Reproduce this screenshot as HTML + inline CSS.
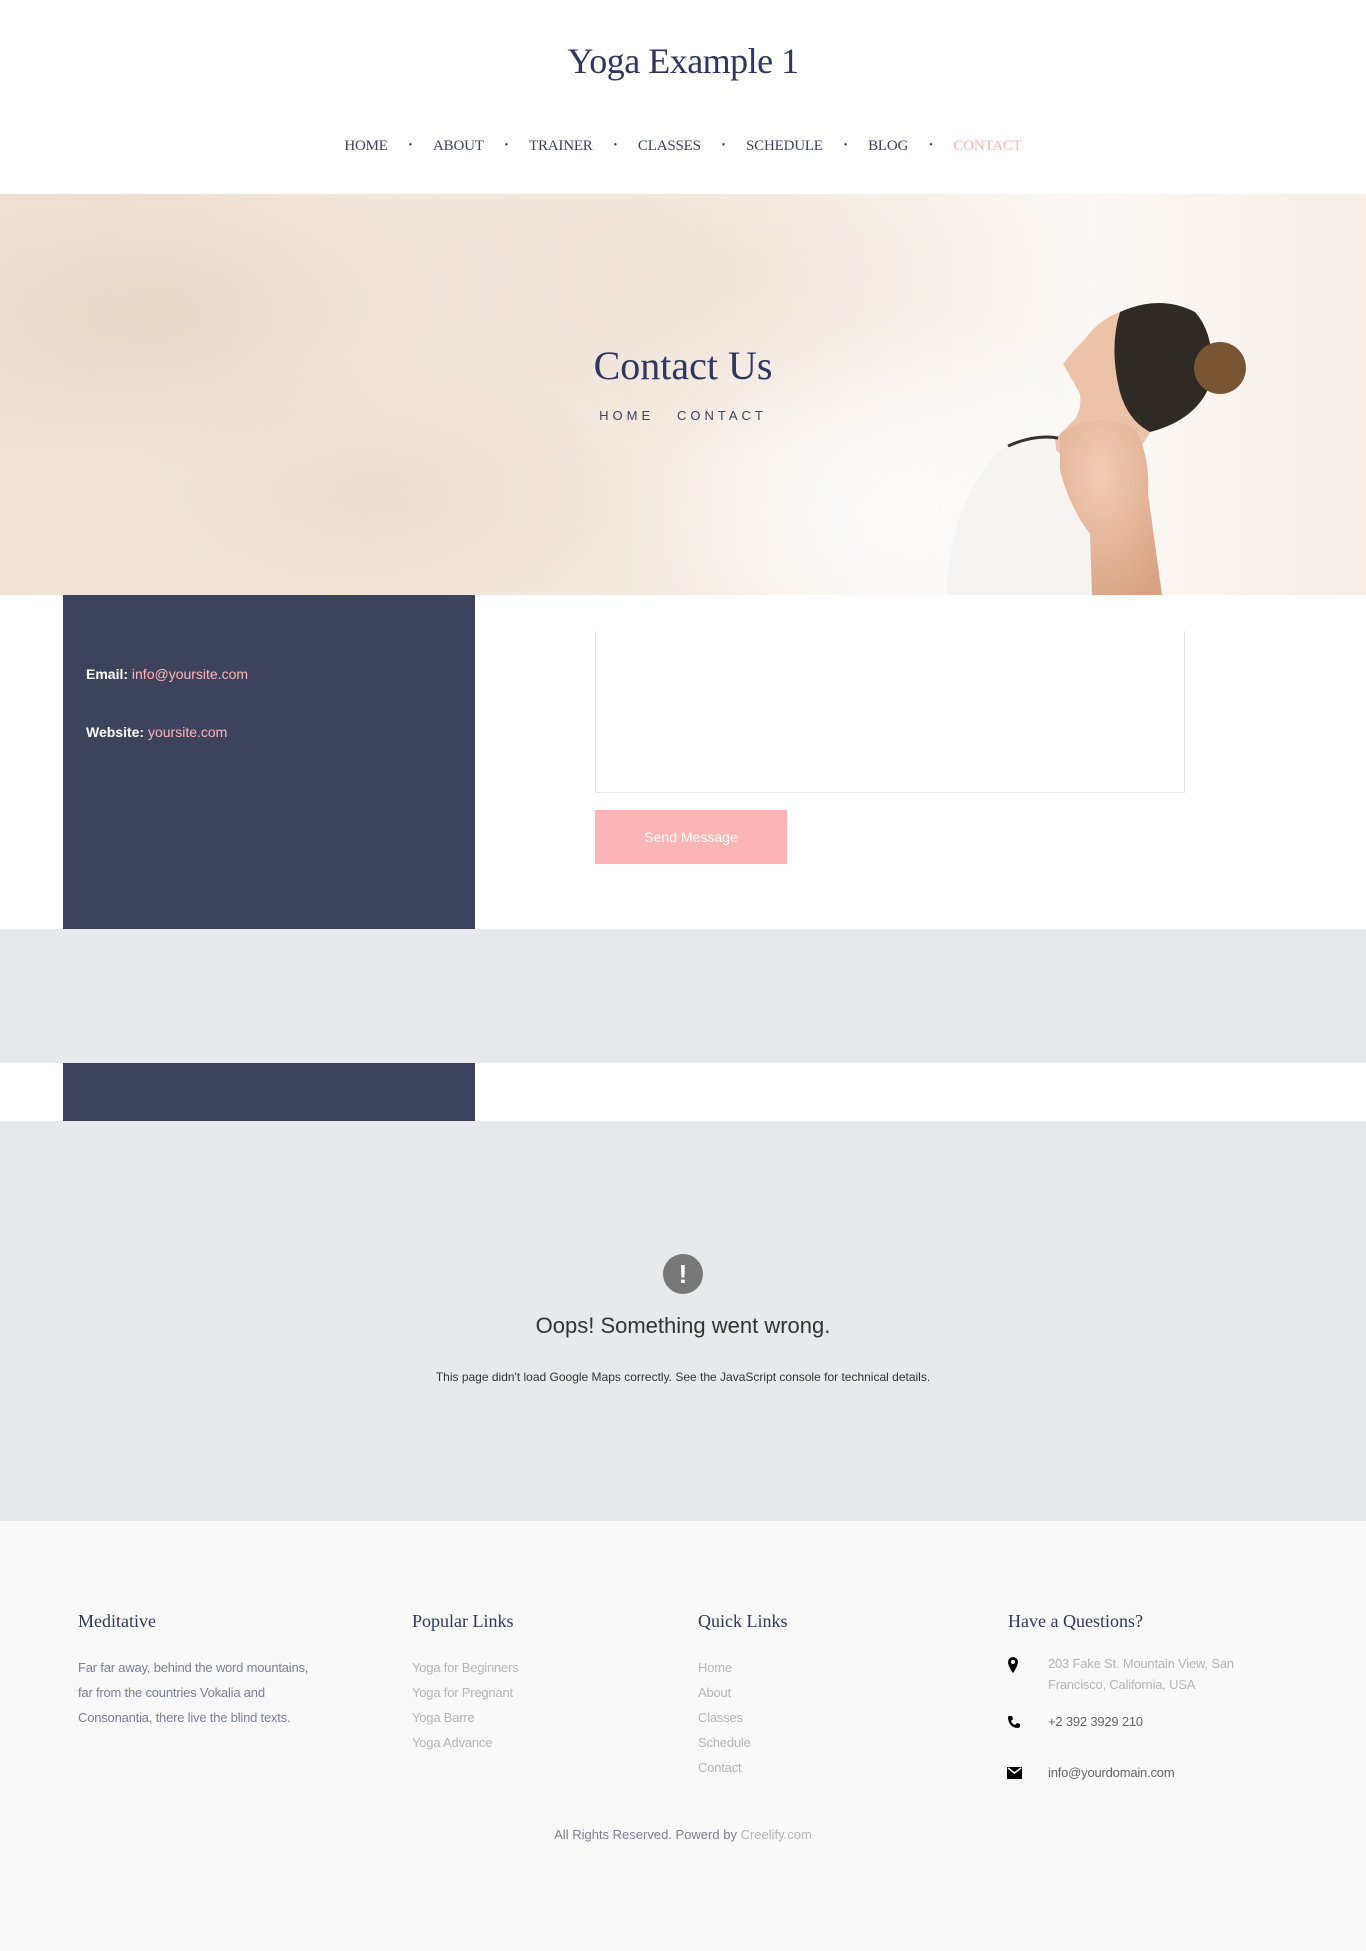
<!DOCTYPE html>
<html><head><meta charset="utf-8"><style>
*{margin:0;padding:0;box-sizing:border-box}
body{width:1366px;height:1951px;background:#fff;position:relative;overflow:hidden;font-family:"Liberation Sans",sans-serif}
.abs{position:absolute}
.serif{font-family:"Liberation Serif",serif}
.title{left:0;width:1366px;top:40px;text-align:center;font-size:36px;color:#2e3661;letter-spacing:-0.5px}
.nav{left:0;width:1366px;top:138px;text-align:center;font-size:15px;color:#3d4159;letter-spacing:-0.2px}
.nav span{margin:0 14px}
.nav .dot{margin:0 7px;font-size:10px;vertical-align:2px}
.hero{left:0;top:194px;width:1366px;height:401px;overflow:hidden;
background:
radial-gradient(ellipse 300px 160px at 150px 120px,rgba(225,205,185,.55),transparent),
radial-gradient(ellipse 260px 140px at 380px 300px,rgba(230,210,190,.5),transparent),
radial-gradient(ellipse 400px 180px at 700px 80px,rgba(235,220,205,.45),transparent),
radial-gradient(ellipse 260px 200px at 900px 320px,rgba(255,255,255,.8),transparent),
linear-gradient(90deg,#efe2d6 0%,#f3e9df 45%,#f8f3ee 65%,#fbf8f5 80%,#f6eee7 100%)}
.tx{font-size:14px;color:#fff}
.tx b{font-weight:bold}
.tx a{color:#ffb5b5;text-decoration:none}
.foot{left:0;top:1521px;width:1366px;height:430px;background:#f9f9f9}
.fh{font-size:18px;color:#2e3661;top:1611px}
.ft{font-size:13px;line-height:25px;color:#b5b5b5;letter-spacing:-0.2px}
</style></head><body>
<div class="abs serif title">Yoga Example 1</div>
<div class="abs serif nav"><span>HOME</span><span class="dot">•</span><span>ABOUT</span><span class="dot">•</span><span>TRAINER</span><span class="dot">•</span><span>CLASSES</span><span class="dot">•</span><span>SCHEDULE</span><span class="dot">•</span><span>BLOG</span><span class="dot">•</span><span style="color:#ffb5b5">CONTACT</span></div>

<div class="abs hero">
<svg width="1366" height="401" style="position:absolute;left:0;top:0">
<defs><radialGradient id="sk" cx=".4" cy=".3" r=".8"><stop offset="0" stop-color="#f1cdb5"/><stop offset="1" stop-color="#d9a283"/></radialGradient></defs>
<path d="M1120 118 Q1100 125 1085 145 Q1070 160 1063 170 Q1072 185 1080 200 Q1082 215 1075 225 L1050 250 L1100 300 Q1145 250 1150 238 Q1125 225 1118 190 Q1112 150 1120 118 Z" fill="#ecc2a8"/>
<path d="M1060 240 Q1100 215 1135 235 Q1150 260 1148 300 Q1155 350 1162 401 L1090 401 Q1080 340 1060 300 Z" fill="url(#sk)"/>
<path d="M1120 118 Q1160 100 1195 118 Q1215 140 1212 185 Q1200 225 1150 238 Q1125 225 1118 190 Q1110 150 1120 118 Z" fill="#2f2a24"/>
<circle cx="1220" cy="174" r="26" fill="#7a5533"/>
<path d="M1010 250 Q1035 240 1055 245 Q1060 300 1090 340 L1092 401 L946 401 Q950 330 975 290 Q990 262 1010 250Z" fill="#f6f3f0"/>
<path d="M1008 252 Q1035 240 1058 244" stroke="#333" stroke-width="3" fill="none"/>
</svg>
<div class="abs serif" style="left:0;width:1366px;top:148px;text-align:center;font-size:40px;color:#2e3661">Contact Us</div>
<div class="abs" style="left:0;width:1366px;top:214px;text-align:center;font-size:13px;letter-spacing:4px;color:#3d4159">HOME &nbsp; CONTACT</div>
</div>

<div class="abs" style="left:63px;top:595px;width:412px;height:334px;background:#3d435c"></div>
<div class="abs tx" style="left:86px;top:666px"><b>Email:</b> <a>info@yoursite.com</a></div>
<div class="abs tx" style="left:86px;top:724px"><b>Website:</b> <a>yoursite.com</a></div>

<div class="abs" style="left:595px;top:631px;width:590px;height:162px;border:1px solid #e6e6e6;border-top:none;background:#fff"></div>
<div class="abs" style="left:595px;top:810px;width:192px;height:54px;background:#ffb5b5;color:#fff;font-size:14px;text-align:center;line-height:54px">Send Message</div>

<div class="abs" style="left:0;top:929px;width:1366px;height:134px;background:#e8e9ed"></div>
<div class="abs" style="left:63px;top:1063px;width:412px;height:58px;background:#3d435c"></div>
<div class="abs" style="left:0;top:1121px;width:1366px;height:400px;background:#e8e9ed"></div>
<div class="abs" style="left:663px;top:1254px;width:40px;height:40px;border-radius:50%;background:#777;color:#fff;font-weight:bold;font-size:26px;text-align:center;line-height:40px">!</div>
<div class="abs" style="left:0;width:1366px;top:1313px;text-align:center;font-size:22px;color:#333">Oops! Something went wrong.</div>
<div class="abs" style="left:0;width:1366px;top:1370px;text-align:center;font-size:12px;color:#333">This page didn't load Google Maps correctly. See the JavaScript console for technical details.</div>

<div class="abs foot"></div>
<div class="abs serif fh" style="left:78px">Meditative</div>
<div class="abs serif fh" style="left:412px">Popular Links</div>
<div class="abs serif fh" style="left:698px">Quick Links</div>
<div class="abs serif fh" style="left:1008px">Have a Questions?</div>
<div class="abs ft" style="left:78px;top:1655px;color:#7a7f99">Far far away, behind the word mountains,<br>far from the countries Vokalia and<br>Consonantia, there live the blind texts.</div>
<div class="abs ft" style="left:412px;top:1655px">Yoga for Beginners<br>Yoga for Pregnant<br>Yoga Barre<br>Yoga Advance</div>
<div class="abs ft" style="left:698px;top:1655px">Home<br>About<br>Classes<br>Schedule<br>Contact</div>
<svg class="abs" style="left:1007px;top:1657px" width="12" height="16" viewBox="0 0 12 16"><path d="M6 0a5 5 0 0 0-5 5c0 4 5 11 5 11s5-7 5-11a5 5 0 0 0-5-5zm0 7a2 2 0 1 1 0-4 2 2 0 0 1 0 4z" fill="#000"/></svg>
<div class="abs ft" style="left:1048px;top:1653px;line-height:21px">203 Fake St. Mountain View, San<br>Francisco, California, USA</div>
<svg class="abs" style="left:1007px;top:1715px" width="13" height="14" viewBox="0 0 13 14"><path d="M2 1l3 0 1 3-2 2q1 3 4 4l2-2 3 1v3q-1 1-3 1Q2 12 1 3q0-2 1-2z" fill="#000"/></svg>
<div class="abs ft" style="left:1048px;top:1709px;color:#666">+2 392 3929 210</div>
<svg class="abs" style="left:1007px;top:1767px" width="15" height="12" viewBox="0 0 15 12"><rect width="15" height="12" fill="#000"/><path d="M1 1l6.5 5 6.5-5" stroke="#fff" stroke-width="1.5" fill="none"/></svg>
<div class="abs ft" style="left:1048px;top:1760px;color:#666">info@yourdomain.com</div>
<div class="abs" style="left:0;width:1366px;top:1827px;text-align:center;font-size:13px;color:#7a7f99">All Rights Reserved. Powerd by <span style="color:#b5b5b5">Creelify.com</span></div>
</body></html>
